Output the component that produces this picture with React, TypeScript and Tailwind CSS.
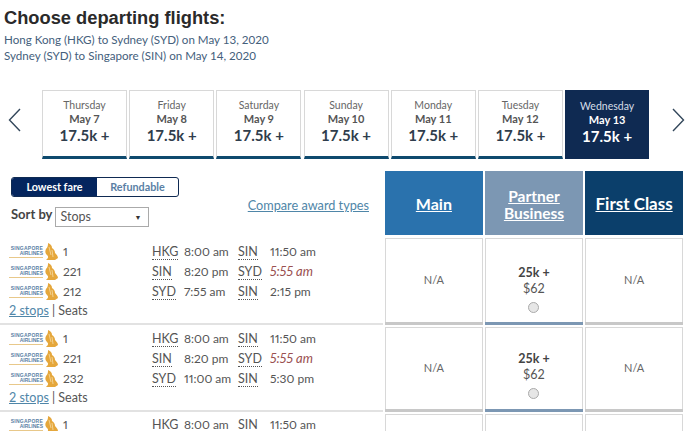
import React from "react"

const font = { fontFamily: "Lato, 'Open Sans', sans-serif" }

const days = [
  { day: "Thursday", date: "May 7" },
  { day: "Friday", date: "May 8" },
  { day: "Saturday", date: "May 9" },
  { day: "Sunday", date: "May 10" },
  { day: "Monday", date: "May 11" },
  { day: "Tuesday", date: "May 12" },
]

const rows = [
  {
    height: "h-[87px]",
    pad: "pt-[4px]",
    fare: "pt-[16px]",
    legs: [
      ["1", "HKG", "8:00 am", "SIN", "11:50 am"],
      ["221", "SIN", "8:20 pm", "SYD", "5:55 am"],
      ["212", "SYD", "7:55 am", "SIN", "2:15 pm"],
    ],
  },
  {
    height: "h-[85px]",
    pad: "pt-[2px]",
    fare: "pt-[12px]",
    legs: [
      ["1", "HKG", "8:00 am", "SIN", "11:50 am"],
      ["221", "SIN", "8:20 pm", "SYD", "5:55 am"],
      ["232", "SYD", "11:00 am", "SIN", "5:30 pm"],
    ],
  },
  {
    height: "h-[86px]",
    pad: "pt-[1px]",
    fare: "",
    legs: [["1", "HKG", "8:00 am", "SIN", "11:50 am"]],
  },
]

const Logo = () => (
  <div className="flex w-[49px] shrink-0 items-center">
    <div className="w-[34px] border-b border-[#e8c88a] pb-px text-right font-['Liberation_Sans',sans-serif] text-[5px] leading-[5px] font-bold text-[#5a7fa5]">
      <div className="tracking-[0.25px]">SINGAPORE</div>
      <div>AIRLINES</div>
    </div>
    <svg width="14" height="18" viewBox="0 0 14 18" className="ml-px">
      <path
        d="M4 0 C7 1 8 3 8 5 C10 6 11 8 11 10 C12 11 14 13 14 15 L11 17 L2 17 C4 15 5 14 3 12 C1 10 1 8 2 6 C4 4 4 2 4 0 Z"
        fill="#e5a73c"
      />
      <path d="M5 4 L7 12 M8 7 L9 14" stroke="#f6dca6" strokeWidth="0.8" fill="none" />
    </svg>
  </div>
)

const Airport = ({ code }: { code: string }) => (
  <span className="border-b border-dotted border-[#555] text-[12.5px] leading-[12px]">{code}</span>
)

const Cell = ({ children, bar }: { children?: React.ReactNode; bar: string }) => (
  <div className="flex w-[98px] flex-col">
    <div className="flex flex-1 flex-col items-center justify-center border-x border-t border-[#d8d8d8]">{children}</div>
    <div className={`h-[3px] ${bar}`} />
  </div>
)

export default function App() {
  return (
    <div className="h-[431px] w-[700px] overflow-hidden bg-white text-[#555]" style={font}>
      <div className="pl-[4px]">
        <h1 className="pt-[8px] font-['Liberation_Sans',sans-serif] text-[18.3px] leading-[20px] font-bold text-[#2a2a2a]">
          Choose departing flights:
        </h1>
        <div className="mt-[4px] text-[11.6px] leading-[16px] text-[#44607c]">
          <div>Hong Kong (HKG) to Sydney (SYD) on May 13, 2020</div>
          <div>Sydney (SYD) to Singapore (SIN) on May 14, 2020</div>
        </div>
      </div>

      <div className="mt-[26px] flex h-[69px] items-stretch">
        <div className="flex w-[42px] items-center pl-[8px] pb-[10px]">
          <svg width="13" height="24" viewBox="0 0 13 24" fill="none" stroke="#33475b" strokeWidth="1.4">
            <path d="M12 1 L1.5 12 L12 23" />
          </svg>
        </div>
        <div className="flex gap-[2.2px]">
          {days.map((d) => (
            <div
              key={d.day}
              className="flex w-[85px] flex-col items-center border-x border-t border-[#d8d8d8] border-b-[3px] border-b-[#0e4a6e] pt-[7px] text-center"
            >
              <div className="text-[10.5px] leading-[14px] text-[#666]">{d.day}</div>
              <div className="text-[11px] leading-[13px] font-bold text-[#555]">{d.date}</div>
              <div className="text-[15px] leading-[21px] font-bold text-[#2f3d4c]">17.5k +</div>
            </div>
          ))}
          <div className="flex w-[84px] flex-col items-center bg-[#0f2a52] pt-[9px] text-center text-white">
            <div className="text-[10.5px] leading-[14px] text-[#d5dde8]">Wednesday</div>
            <div className="text-[11px] leading-[13px] font-bold">May 13</div>
            <div className="text-[15px] leading-[21px] font-bold">17.5k +</div>
          </div>
        </div>
        <div className="flex items-center pb-[10px] pl-[23px]">
          <svg width="13" height="24" viewBox="0 0 13 24" fill="none" stroke="#33475b" strokeWidth="1.4">
            <path d="M1 1 L11.5 12 L1 23" />
          </svg>
        </div>
      </div>

      <div className="mt-[12px] flex h-[64px]">
        <div className="relative w-[385px] shrink-0 pl-[11px] pt-[6px]">
          <div className="flex h-[20px] w-[168px] overflow-hidden rounded-[3px] border border-[#0f2a52] text-[10.8px] font-bold">
            <div className="flex w-[85px] items-center justify-center bg-[#04255e] text-white">Lowest fare</div>
            <div className="flex flex-1 items-center justify-center text-[#5a7fa5]">Refundable</div>
          </div>
          <div className="mt-[10px] flex items-start gap-[3px]">
            <span className="text-[13px] leading-[15px] font-bold text-[#444]">Sort by</span>
            <div className="flex h-[20px] w-[94px] items-center justify-between border border-[#aaa] pl-[4px] pr-[7px] text-[12.5px]">
              Stops
              <span className="text-[7px] text-[#333]">▼</span>
            </div>
          </div>
          <span className="absolute right-[16px] top-[25px] text-[12.7px] text-[#4f86a8] underline">Compare award types</span>
        </div>
        <div className="flex w-[298px] gap-[2.3px] text-[16px] font-bold text-white underline">
          <div className="flex w-[98px] items-center justify-center bg-[#2a72ad] pt-[2px]">Main</div>
          <div className="flex w-[98px] items-center justify-center bg-[#7c97b3] pt-[3px] text-center text-[15.5px] leading-[17px]">
            Partner
            <br />
            Business
          </div>
          <div className="flex w-[98px] items-center justify-center bg-[#0b3f6b] pt-[2px] text-[17px]">First Class</div>
        </div>
      </div>

      <div className="mt-[3px] flex flex-col gap-[2px]">
        {rows.map((row, i) => (
          <div key={i} className={`flex shrink-0 ${row.height}`}>
            <div className="w-[385px] shrink-0 pr-[2px]">
              <div className={`h-full pl-[9px] ${row.pad} ${i < 2 ? "border-b-2 border-[#e2e2e2]" : ""}`}>
                {row.legs.map((leg) => (
                  <div key={leg[0]} className="flex h-[20px] items-center text-[12px] proportional-nums">
                    <Logo />
                    <div className="w-[94px] pl-[5px]">{leg[0]}</div>
                    <div className="w-[32px]"><Airport code={leg[1]} /></div>
                    <div className="w-[54px]">{leg[2]}</div>
                    <div className="w-[32px]"><Airport code={leg[3]} /></div>
                    <div className={leg[4] === "5:55 am" ? "text-[13px] italic text-[#9a5050]" : ""}>{leg[4]}</div>
                  </div>
                ))}
                {i < 2 && (
                  <div className="text-[12.5px] leading-[17px]">
                    <span className="text-[#4f86a8] underline">2 stops</span> | Seats
                  </div>
                )}
              </div>
            </div>
            <div className="flex w-[298px] gap-[2.3px]">
              <Cell bar="bg-[#c8c8c8]">
                {i < 2 && <span className="text-[11px] text-[#666]">N/A</span>}
              </Cell>
              <Cell bar="bg-[#7c97b3]">
                {i < 2 && (
                  <>
                    <span className={`${row.fare} text-[12.5px] leading-[16px] font-bold text-[#444]`}>25k +</span>
                    <span className="text-[12.5px] leading-[16px] text-[#555]">$62</span>
                    <span className="mt-[5px] h-[11px] w-[11px] rounded-full border border-[#aaa] bg-[#e6e6e6]" />
                  </>
                )}
              </Cell>
              <Cell bar="bg-[#c8c8c8]">
                {i < 2 && <span className="text-[11px] text-[#666]">N/A</span>}
              </Cell>
            </div>
          </div>
        ))}
      </div>
    </div>
  )
}
